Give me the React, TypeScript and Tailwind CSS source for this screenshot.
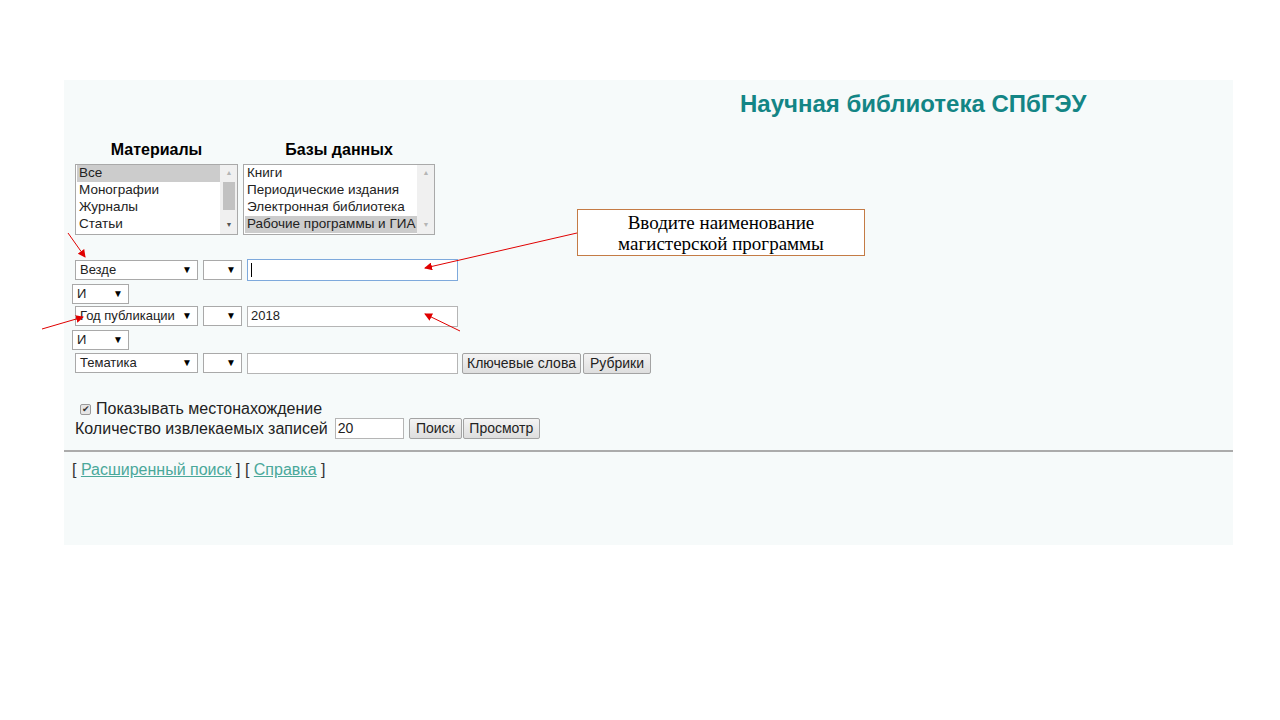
import React from "react"

// Fake select box, drawn like an old IE dropdown
function Select({ label, width, className = "" }: { label: string; width: string; className?: string }) {
  return (
    <div
      className={`flex items-center justify-between h-[20px] border border-[#a9a9a9] bg-white pl-[4px] pr-[5px] text-[13px] text-[#222] ${width} ${className}`}
    >
      <span className="whitespace-nowrap">{label}</span>
      <span className="text-[10px] leading-none text-black">▼</span>
    </div>
  )
}

function Button({ label, width }: { label: string; width: string }) {
  return (
    <div
      className={`h-[21px] flex items-center justify-center border border-[#a3a3a3] rounded-[2px] bg-gradient-to-b from-[#f4f4f4] to-[#dedede] text-[14px] text-[#222] whitespace-nowrap ${width}`}
    >
      {label}
    </div>
  )
}

function ListBox({
  items,
  selected,
  width,
  thumb,
}: {
  items: string[]
  selected: number
  width: string
  thumb: boolean
}) {
  return (
    <div className={`flex h-[71px] border border-[#a9a9a9] bg-white ${width}`}>
      <div className="flex-1 overflow-hidden pl-[1px]">
        {items.map((item, i) => (
          <div
            key={item}
            className={`h-[17px] leading-[16px] pl-[2px] text-[13.5px] whitespace-nowrap text-[#222] ${
              i === selected ? "bg-[#cccccc]" : ""
            }`}
          >
            {item}
          </div>
        ))}
      </div>
      <div className="w-[17px] flex flex-col bg-[#f0f0f0] border-l border-[#f0f0f0]">
        <div className="h-[17px] flex items-center justify-center text-[7px] text-[#b5b5b5]">▲</div>
        <div className="flex-1 px-[2px]">
          {thumb && <div className="h-[28px] bg-[#c2c2c2]" />}
        </div>
        <div className={`h-[17px] flex items-center justify-center text-[7px] ${thumb ? "text-[#555]" : "text-[#b5b5b5]"}`}>
          ▼
        </div>
      </div>
    </div>
  )
}

export default function App() {
  return (
    <div className="relative min-h-[720px] w-[1280px] bg-white font-['Liberation_Sans',Arial,sans-serif]">
      <div className="pt-[80px] pl-[64px]">
        <div className="w-[1169px] h-[465px] bg-[#f6fafa] flex flex-col">
          <h1 className="pl-[676px] mt-[11px] text-[24px] leading-[26px] font-bold text-[#138585]">
            Научная библиотека СПбГЭУ
          </h1>

          {/* materials and databases */}
          <div className="flex gap-[5px] pl-[11px] mt-[23px]">
            <div className="flex flex-col items-center">
              <div className="text-[16px] leading-[20px] font-bold text-black">Материалы</div>
              <div className="mt-[4px]">
                <ListBox
                  items={["Все", "Монографии", "Журналы", "Статьи"]}
                  selected={0}
                  width="w-[163px]"
                  thumb
                />
              </div>
            </div>
            <div className="flex flex-col items-center">
              <div className="text-[16px] leading-[20px] font-bold text-black">Базы данных</div>
              <div className="mt-[4px]">
                <ListBox
                  items={["Книги", "Периодические издания", "Электронная библиотека", "Рабочие программы и ГИА"]}
                  selected={3}
                  width="w-[192px]"
                  thumb={false}
                />
              </div>
            </div>
          </div>

          {/* search rows */}
          <div className="flex items-center gap-[5px] pl-[11px] mt-[24px] h-[22px]">
            <Select label="Везде" width="w-[123px]" />
            <Select label="" width="w-[39px]" />
            <div className="w-[211px] h-[22px] border border-[#7ea9dc] bg-white flex items-center pl-[3px]">
              <span className="w-[1px] h-[14px] bg-black" />
            </div>
          </div>
          <div className="pl-[8px] mt-[3px]">
            <Select label="И" width="w-[57px]" className="h-[18px]" />
          </div>
          <div className="flex items-center gap-[5px] pl-[11px] mt-[1px] h-[22px]">
            <Select label="Год публикации" width="w-[123px]" />
            <Select label="" width="w-[39px]" />
            <div className="w-[211px] h-[21px] border border-[#b5b5b5] bg-white flex items-center pl-[3px] text-[13px] text-[#222]">
              2018
            </div>
          </div>
          <div className="pl-[8px] mt-[3px]">
            <Select label="И" width="w-[57px]" className="h-[18px]" />
          </div>
          <div className="flex items-center pl-[11px] mt-[2px] h-[22px]">
            <div className="flex gap-[5px]">
              <Select label="Тематика" width="w-[123px]" />
              <Select label="" width="w-[39px]" />
              <div className="w-[211px] h-[21px] border border-[#b5b5b5] bg-white" />
            </div>
            <div className="flex ml-[4px] gap-[2px]">
              <Button label="Ключевые слова" width="w-[119px]" />
              <Button label="Рубрики" width="w-[68px]" />
            </div>
          </div>

          {/* options */}
          <div className="flex items-center pl-[16px] mt-[26px] h-[18px] text-[16px] text-[#222]">
            <span className="w-[11px] h-[11px] rounded-[2px] border border-[#9a9a9a] bg-[#e6e6e6] flex items-center justify-center text-[9px] leading-none text-[#333]">
              ✔
            </span>
            <span className="ml-[5px]">Показывать местонахождение</span>
          </div>
          <div className="flex items-center pl-[11px] h-[21px] text-[16px] text-[#222]">
            <span>Количество извлекаемых записей</span>
            <div className="ml-[7px] w-[69px] h-[21px] border border-[#b5b5b5] bg-white flex items-center pl-[2px] text-[14px]">
              20
            </div>
            <div className="flex ml-[5px] gap-[1px]">
              <Button label="Поиск" width="w-[53px]" />
              <Button label="Просмотр" width="w-[77px]" />
            </div>
          </div>

          <div className="mt-[11px] border-t-2 border-[#ababab]" />

          <div className="pl-[8px] mt-[9px] text-[16px] leading-[18px] text-[#333]">
            [ <span className="underline text-[#4aa89a]">Расширенный поиск</span> ] [{" "}
            <span className="underline text-[#4aa89a]">Справка</span> ]
          </div>
        </div>
      </div>

      {/* callout */}
      <div className="absolute left-[577px] top-[209px] w-[288px] h-[47px] border border-[#c47b45] bg-white flex flex-col items-center justify-center font-['Liberation_Serif','Times_New_Roman',serif] text-[19px] leading-[21px] text-black">
        <span>Вводите наименование</span>
        <span>магистерской программы</span>
      </div>

      {/* red arrows */}
      <svg className="absolute inset-0 pointer-events-none" width="1280" height="720">
        <defs>
          <marker id="head" markerWidth="8" markerHeight="8" refX="7" refY="4" orient="auto" markerUnits="userSpaceOnUse">
            <path d="M0,0 L8,4 L0,8 Z" fill="#e00000" />
          </marker>
        </defs>
        <g stroke="#e00000" strokeWidth="1" fill="none">
          <line x1="68" y1="233" x2="85" y2="257" markerEnd="url(#head)" />
          <line x1="577" y1="233" x2="425" y2="268" markerEnd="url(#head)" />
          <line x1="42" y1="329" x2="83" y2="317" markerEnd="url(#head)" />
          <line x1="460" y1="331" x2="425" y2="314" markerEnd="url(#head)" />
        </g>
      </svg>
    </div>
  )
}
